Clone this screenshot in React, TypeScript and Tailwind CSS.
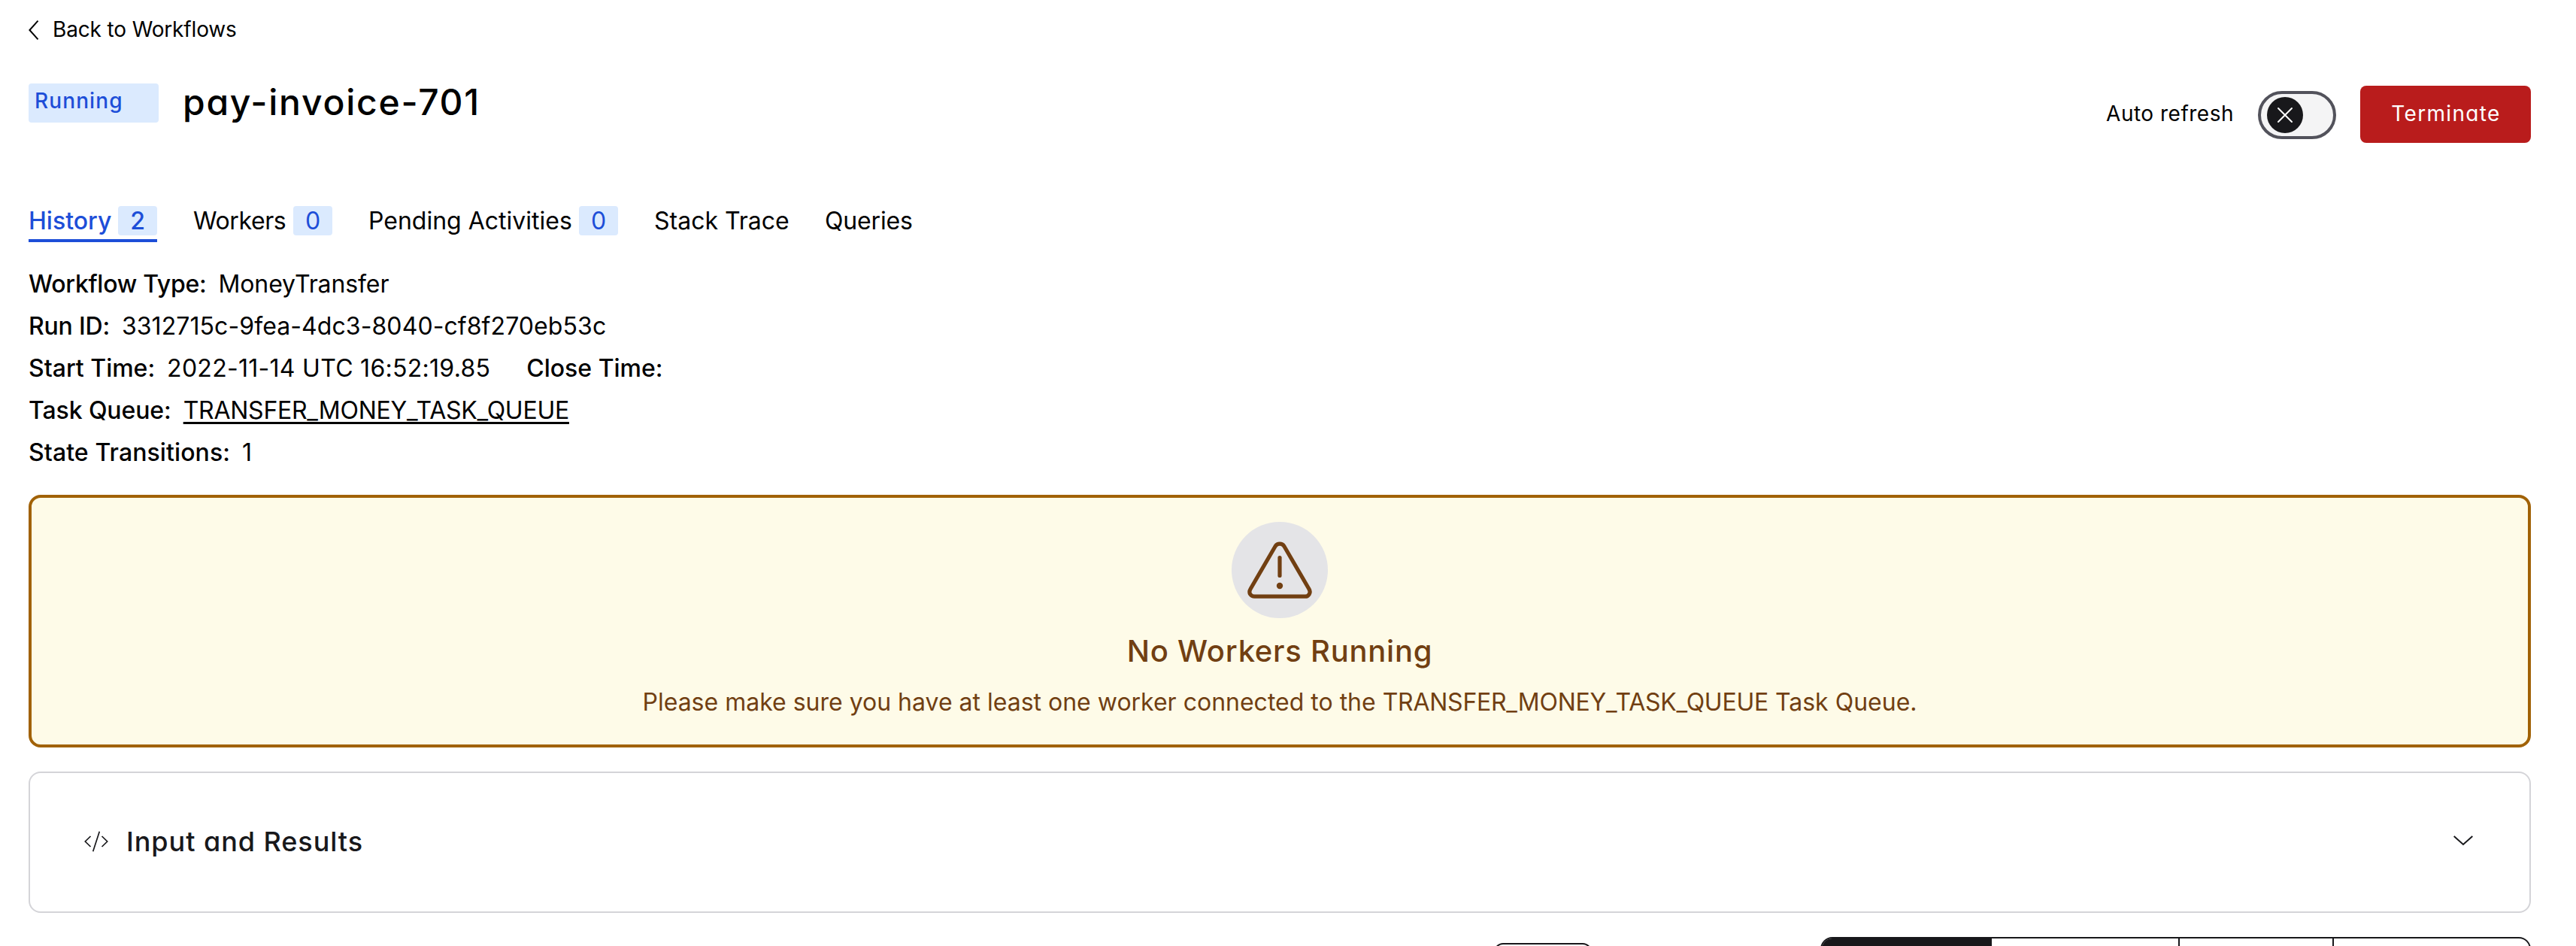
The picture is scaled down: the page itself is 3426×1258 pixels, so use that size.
import React from 'react';

type TabProps = {
  label: string;
  count?: number;
  active?: boolean;
  width: string;
  tracking?: string;
};

const display = "[font-feature-settings:'cv11']";

function Tab({ label, count, active = false, width, tracking = '' }: TabProps) {
  return (
    <a
      className={`flex h-[53px] items-start justify-between border-b-4 ${width} ${
        active ? 'border-[#1d4ed8] font-medium text-[#1d4ed8]' : 'border-transparent'
      }`}
    >
      <span className={`mt-px leading-[48px] whitespace-nowrap ${tracking}`}>{label}</span>
      {count !== undefined && (
        <span className="mt-[5px] flex h-[39px] w-[52px] items-center justify-center rounded bg-[#dbeafe] text-[#1d4ed8]">
          {count}
        </span>
      )}
    </a>
  );
}

function Detail({
  label,
  tracking = '',
  children,
}: {
  label: string;
  tracking?: string;
  children?: React.ReactNode;
}) {
  return (
    <div className="flex gap-4">
      <span className={`font-medium ${tracking}`}>{label}</span>
      {children}
    </div>
  );
}

function ToggleSwitch() {
  return (
    <button className="mt-0.5 flex h-16 w-[104px] items-center rounded-full border-4 border-[#52525b] bg-[#f4f4f5] pl-2">
      <span className="flex size-12 items-center justify-center rounded-full bg-[#18181b]">
        <svg width="22" height="22" viewBox="0 0 22 22" fill="none" stroke="#fff" strokeWidth="2" strokeLinecap="round">
          <path d="M2 2 20 20M20 2 2 20" />
        </svg>
      </span>
    </button>
  );
}

export default function App() {
  return (
    <main className="flex h-[1258px] w-full flex-col overflow-hidden bg-white pr-[60px] pl-[38px] font-['Inter',sans-serif] text-[32px] text-black">
      <a className="mt-[19px] flex h-10 shrink-0 items-center gap-[18px] text-[28px] leading-10 tracking-[-0.15px]">
        <svg className="mt-0.5" width="14" height="26" viewBox="0 0 14 26" fill="none" stroke="currentColor" strokeWidth="2">
          <path d="M12.5.7 1.4 13l11.1 12.3" />
        </svg>
        Back to Workflows
      </a>

      <header className="mt-[52px] flex h-[82px] shrink-0 items-start justify-between">
        <div className="flex items-start gap-8">
          <span
            className={`h-[52px] w-[173px] rounded bg-[#dbeafe] pt-[3px] pl-2 text-[28px] leading-10 font-medium tracking-[1.1px] text-[#1d4ed8] ${display}`}
          >
            Running
          </span>
          <h1 className={`-mt-[3px] text-[48px] leading-[56px] font-medium tracking-[1.75px] ${display}`}>
            pay-invoice-701
          </h1>
        </div>
        <div className={`mt-[3px] flex h-[76px] items-center gap-8 text-[28px] leading-10 ${display}`}>
          <span className="pb-0.5 tracking-[0.5px]">Auto refresh</span>
          <ToggleSwitch />
          <button className="h-[76px] w-[227px] rounded-lg bg-[#b91c1c] pb-0.5 pl-px tracking-[1.35px] text-white">
            Terminate
          </button>
        </div>
      </header>

      <nav className="mt-[76px] flex shrink-0 gap-12">
        <Tab label="History" count={2} active width="w-[171px]" />
        <Tab label="Workers" count={0} width="w-[185px]" tracking="tracking-[-0.4px]" />
        <Tab label="Pending Activities" count={0} width="w-[332px]" />
        <Tab label="Stack Trace" width="w-[179px]" />
        <Tab label="Queries" width="w-[117px]" tracking="tracking-[-0.15px]" />
      </nav>

      <section className="mt-8 flex shrink-0 flex-col gap-2 leading-[48px]">
        <Detail label="Workflow Type:" tracking="tracking-[-0.27px]">
          <span className="tracking-[-0.1px]">MoneyTransfer</span>
        </Detail>
        <Detail label="Run ID:" tracking="tracking-[-0.2px]">
          <span className="tracking-[0.08px]">3312715c-9fea-4dc3-8040-cf8f270eb53c</span>
        </Detail>
        <div className="flex gap-12">
          <Detail label="Start Time:">
            <span className="tracking-[0.28px]">2022-11-14 UTC 16:52:19.85</span>
          </Detail>
          <Detail label="Close Time:" />
        </div>
        <Detail label="Task Queue:" tracking="tracking-[-0.1px]">
          <a className="tracking-[-0.25px] underline decoration-[3px] underline-offset-[4px] [text-decoration-skip-ink:none]">
            TRANSFER_MONEY_TASK_QUEUE
          </a>
        </Detail>
        <Detail label="State Transitions:" tracking="tracking-[0.1px]">
          <span>1</span>
        </Detail>
      </section>

      <section className="mt-8 flex h-[336px] shrink-0 flex-col items-center rounded-2xl border-4 border-[#a16207] bg-[#fefbe8] pt-8 text-[#713f12]">
        <div className="flex size-32 items-center justify-center rounded-full bg-[#e4e4e7]">
          <svg width="88" height="80" viewBox="0 0 88 80" fill="none" stroke="currentColor" strokeWidth="5.2" strokeLinecap="round" strokeLinejoin="round">
            <path d="M38.200 8.200Q40.300 5.200 44 5.200T49.800 8.200L82.800 65Q85.300 69 83.200 72.200T77.500 75.200H10.500Q6.900 75.200 4.800 72.200T5.200 65Z" />
            <path d="M44 23.500v24" />
            <circle cx="44" cy="61" r="4.200" fill="currentColor" stroke="none" />
          </svg>
        </div>
        <h2 className={`mt-5 text-[40px] leading-[48px] font-medium tracking-[0.75px] ${display}`}>
          No Workers Running
        </h2>
        <p className="mt-5 leading-[48px]">
          Please make sure you have at least one worker connected to the{' '}
          <span className="tracking-[-0.25px]">TRANSFER_MONEY_TASK_QUEUE</span> Task Queue.
        </p>
      </section>

      <section className="mt-8 flex h-[188px] shrink-0 items-center justify-between rounded-2xl border-2 border-[#d4d4d8] pr-[75px] pb-0.5 pl-[72px] text-[#18181b]">
        <div className="flex items-center gap-6">
          <svg width="32" height="28" viewBox="0 0 32 28" fill="none" stroke="currentColor" strokeWidth="1.7">
            <path d="M8.500 7 1.300 14l7.200 7M23.500 7l7.200 7-7.200 7M20.300.8 11.700 27.200" />
          </svg>
          <h2 className={`text-[36px] leading-[48px] font-medium tracking-[0.95px] ${display}`}>
            Input and Results
          </h2>
        </div>
        <svg className="-mt-0.5" width="26" height="14" viewBox="0 0 26 14" fill="none" stroke="currentColor" strokeWidth="2">
          <path d="M.7 1 13 12 25.300 1" />
        </svg>
      </section>

      <div className="mt-8 flex shrink-0 justify-end gap-[304px]">
        <div className="mt-2 h-14 w-[130px] rounded-xl border-2 border-[#18181b]" />
        <div className="flex h-20 w-[945px] overflow-hidden rounded-2xl border-2 border-[#18181b] bg-white">
          <div className="w-[226px] bg-[#18181b]" />
          <div className="w-[250px] border-r-2 border-[#18181b]" />
          <div className="w-[205px] border-r-2 border-[#18181b]" />
          <div className="flex-1" />
        </div>
      </div>
    </main>
  );
}
